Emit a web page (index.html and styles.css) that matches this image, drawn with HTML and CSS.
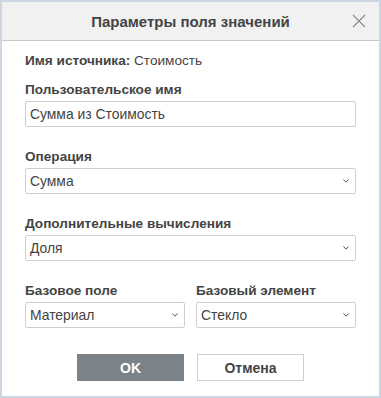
FILE: index.html
```html
<!DOCTYPE html>
<html lang="ru">
<head>
<meta charset="utf-8">
<link rel="stylesheet" href="styles.css">
</head>
<body>
<div class="dialog">
  <div class="header">
    <span class="title">Параметры поля значений</span>
    <svg class="close" width="14" height="14" viewBox="0 0 14 14"><path d="M1 1L13 13M13 1L1 13" stroke="#8a8a8a" stroke-width="1.1" fill="none"/></svg>
  </div>
  <div class="body">
    <div class="source"><b>Имя источника:</b> Стоимость</div>
    <div class="field f-name">
      <div class="label">Пользовательское имя</div>
      <div class="box">Сумма из Стоимость</div>
    </div>
    <div class="field">
      <div class="label">Операция</div>
      <div class="box select">Сумма<svg class="chev" width="6" height="4" viewBox="0 0 6 4"><path d="M0.5 0.5L3 3.2L5.5 0.5" stroke="#555" stroke-width="1" fill="none"/></svg></div>
    </div>
    <div class="field">
      <div class="label">Дополнительные вычисления</div>
      <div class="box select">Доля<svg class="chev" width="6" height="4" viewBox="0 0 6 4"><path d="M0.5 0.5L3 3.2L5.5 0.5" stroke="#555" stroke-width="1" fill="none"/></svg></div>
    </div>
    <div class="row">
      <div class="field">
        <div class="label">Базовое поле</div>
        <div class="box select">Материал<svg class="chev" width="6" height="4" viewBox="0 0 6 4"><path d="M0.5 0.5L3 3.2L5.5 0.5" stroke="#555" stroke-width="1" fill="none"/></svg></div>
      </div>
      <div class="field">
        <div class="label">Базовый элемент</div>
        <div class="box select">Стекло<svg class="chev" width="6" height="4" viewBox="0 0 6 4"><path d="M0.5 0.5L3 3.2L5.5 0.5" stroke="#555" stroke-width="1" fill="none"/></svg></div>
      </div>
    </div>
    <div class="buttons">
      <div class="btn ok">OK</div>
      <div class="btn cancel">Отмена</div>
    </div>
  </div>
</div>
</body>
</html>
```
FILE: styles.css
```css
html, body { margin: 0; padding: 0; }
body { font-family: "Liberation Sans", Arial, sans-serif; color: #444; background: #fff; }
.dialog {
  width: 381px; height: 398px; box-sizing: border-box;
  border: 2px solid #cdd7e3; background: #fff;
  display: flex; flex-direction: column;
}
.header {
  height: 38px; flex: none; background: #f1f1f1; border-bottom: 1px solid #c8c8c8;
  display: flex; align-items: center; justify-content: center; position: relative;
}
.title { font-size: 15px; font-weight: bold; color: #444; }
.close { position: absolute; right: 13px; top: 12px; }
.body { padding: 0 23px; display: flex; flex-direction: column; }
.source { font-size: 13.6px; color: #444; margin-top: 12px; line-height: 16px; }
.field { display: flex; flex-direction: column; margin-top: 22px; }
.f-name { margin-top: 13px; }
.label { font-size: 13.6px; font-weight: bold; color: #444; line-height: 16px; margin-bottom: 3px; }
.row { display: flex; gap: 11px; }
.row .field { flex: 1; }
.box {
  height: 24px; box-sizing: content-box; border: 1px solid #cfcfcf; border-radius: 2px;
  font-size: 13.9px; color: #444; padding: 0 6px 0 4px; display: flex; align-items: center;
}
.select { justify-content: space-between; }
.buttons { display: flex; justify-content: center; gap: 13px; margin-top: 26px; }
.btn {
  width: 107px; height: 27px; box-sizing: border-box; display: flex; align-items: center; justify-content: center;
  font-size: 14px; font-weight: bold;
}
.ok { background: #7b8389; color: #fff; }
.cancel { border: 1px solid #cfcfcf; color: #444; background: #fff; }
```
